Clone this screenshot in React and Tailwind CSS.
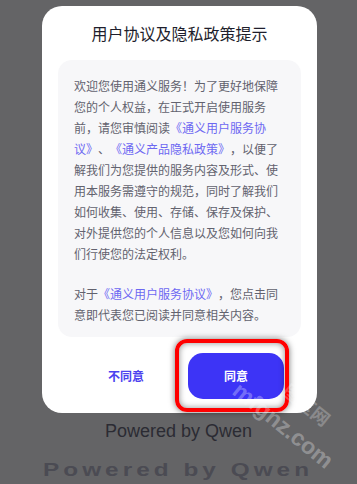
export default function App() {
  const cjk = { fontFamily: '"Noto Sans CJK SC", "Noto Sans", sans-serif' };
  const Link = ({ children }) => <span className="text-[#6d68f2]">{children}</span>;
  return (
    <div
      lang="zh-CN"
      className="relative w-[357px] h-[484px] overflow-hidden bg-[#646466] [text-spacing-trim:space-all]"
      style={cjk}
    >
      <div className="pt-[6px]">
        <div className="ml-[42px] w-[275px] bg-white rounded-[20px] flex flex-col pt-4 pb-[14px]">
          <div className="text-center text-[16px] leading-[22px] font-normal text-[#1e1e2c]">
            用户协议及隐私政策提示
          </div>
          <div className="mt-4 mx-4 bg-[#f7f7f9] rounded-[14px] pt-[15px] pb-[12px] px-4 text-[12px] leading-[21px] text-[#62626e]">
            <p className="whitespace-nowrap">
              欢迎您使用通义服务！为了更好地保障<br />
              您的个人权益，在正式开启使用服务<br />
              前，请您审慎阅读<Link>《通义用户服务协<br />
              议》</Link>、<Link>《通义产品隐私政策》</Link>，以便了<br />
              解我们为您提供的服务内容及形式、使<br />
              用本服务需遵守的规范，同时了解我们<br />
              如何收集、使用、存储、保存及保护、<br />
              对外提供您的个人信息以及您如何向我<br />
              们行使您的法定权利。
            </p>
            <p className="mt-[19px] whitespace-nowrap">
              对于<Link>《通义用户服务协议》</Link>，您点击同<br />
              意即代表您已阅读并同意相关内容。
            </p>
          </div>
          <div className="mt-4 flex items-center pl-[36px] gap-[14px]">
            <button className="w-[96px] h-[46px] text-[12px] font-bold text-[#4b42ef]">不同意</button>
            <button className="w-[96px] h-[46px] rounded-[15px] bg-[#3d34f6] text-[12px] font-bold text-white">同意</button>
          </div>
        </div>
        <div
          className="mt-[7px] text-center text-[18px] leading-[22px] text-[#2b2b33]"
          style={{ fontFamily: '"Liberation Sans", Arial, sans-serif' }}
        >
          Powered by Qwen
        </div>
        <div className="mt-[17px] flex justify-center">
          <div
            className="text-[18px] leading-[22px] font-bold tracking-[3px] text-[#4b4b53] scale-x-[1.35] whitespace-nowrap"
            style={{ fontFamily: '"Liberation Sans", Arial, sans-serif' }}
          >
            Powered by Qwen
          </div>
        </div>
      </div>

      <div className="absolute left-[175px] top-[339px] w-[114px] h-[73px] border-[4px] border-[#ff0000] rounded-[12px] shadow-[0_0_6px_rgba(0,0,0,0.55),inset_0_0_6px_rgba(0,0,0,0.45)]" />

      <div
        className="absolute left-[236px] top-[370px] text-[23px] font-bold text-white/30 rotate-[39deg] origin-left whitespace-nowrap"
        style={{ fontFamily: '"Liberation Sans", Arial, sans-serif' }}
      >
        mfgnz.com
      </div>
      <div
        className="absolute left-[286px] top-[374px] text-[18px] font-bold text-white/25 rotate-[39deg] origin-left whitespace-nowrap"
        style={cjk}
      >
        图区网
      </div>
    </div>
  );
}
